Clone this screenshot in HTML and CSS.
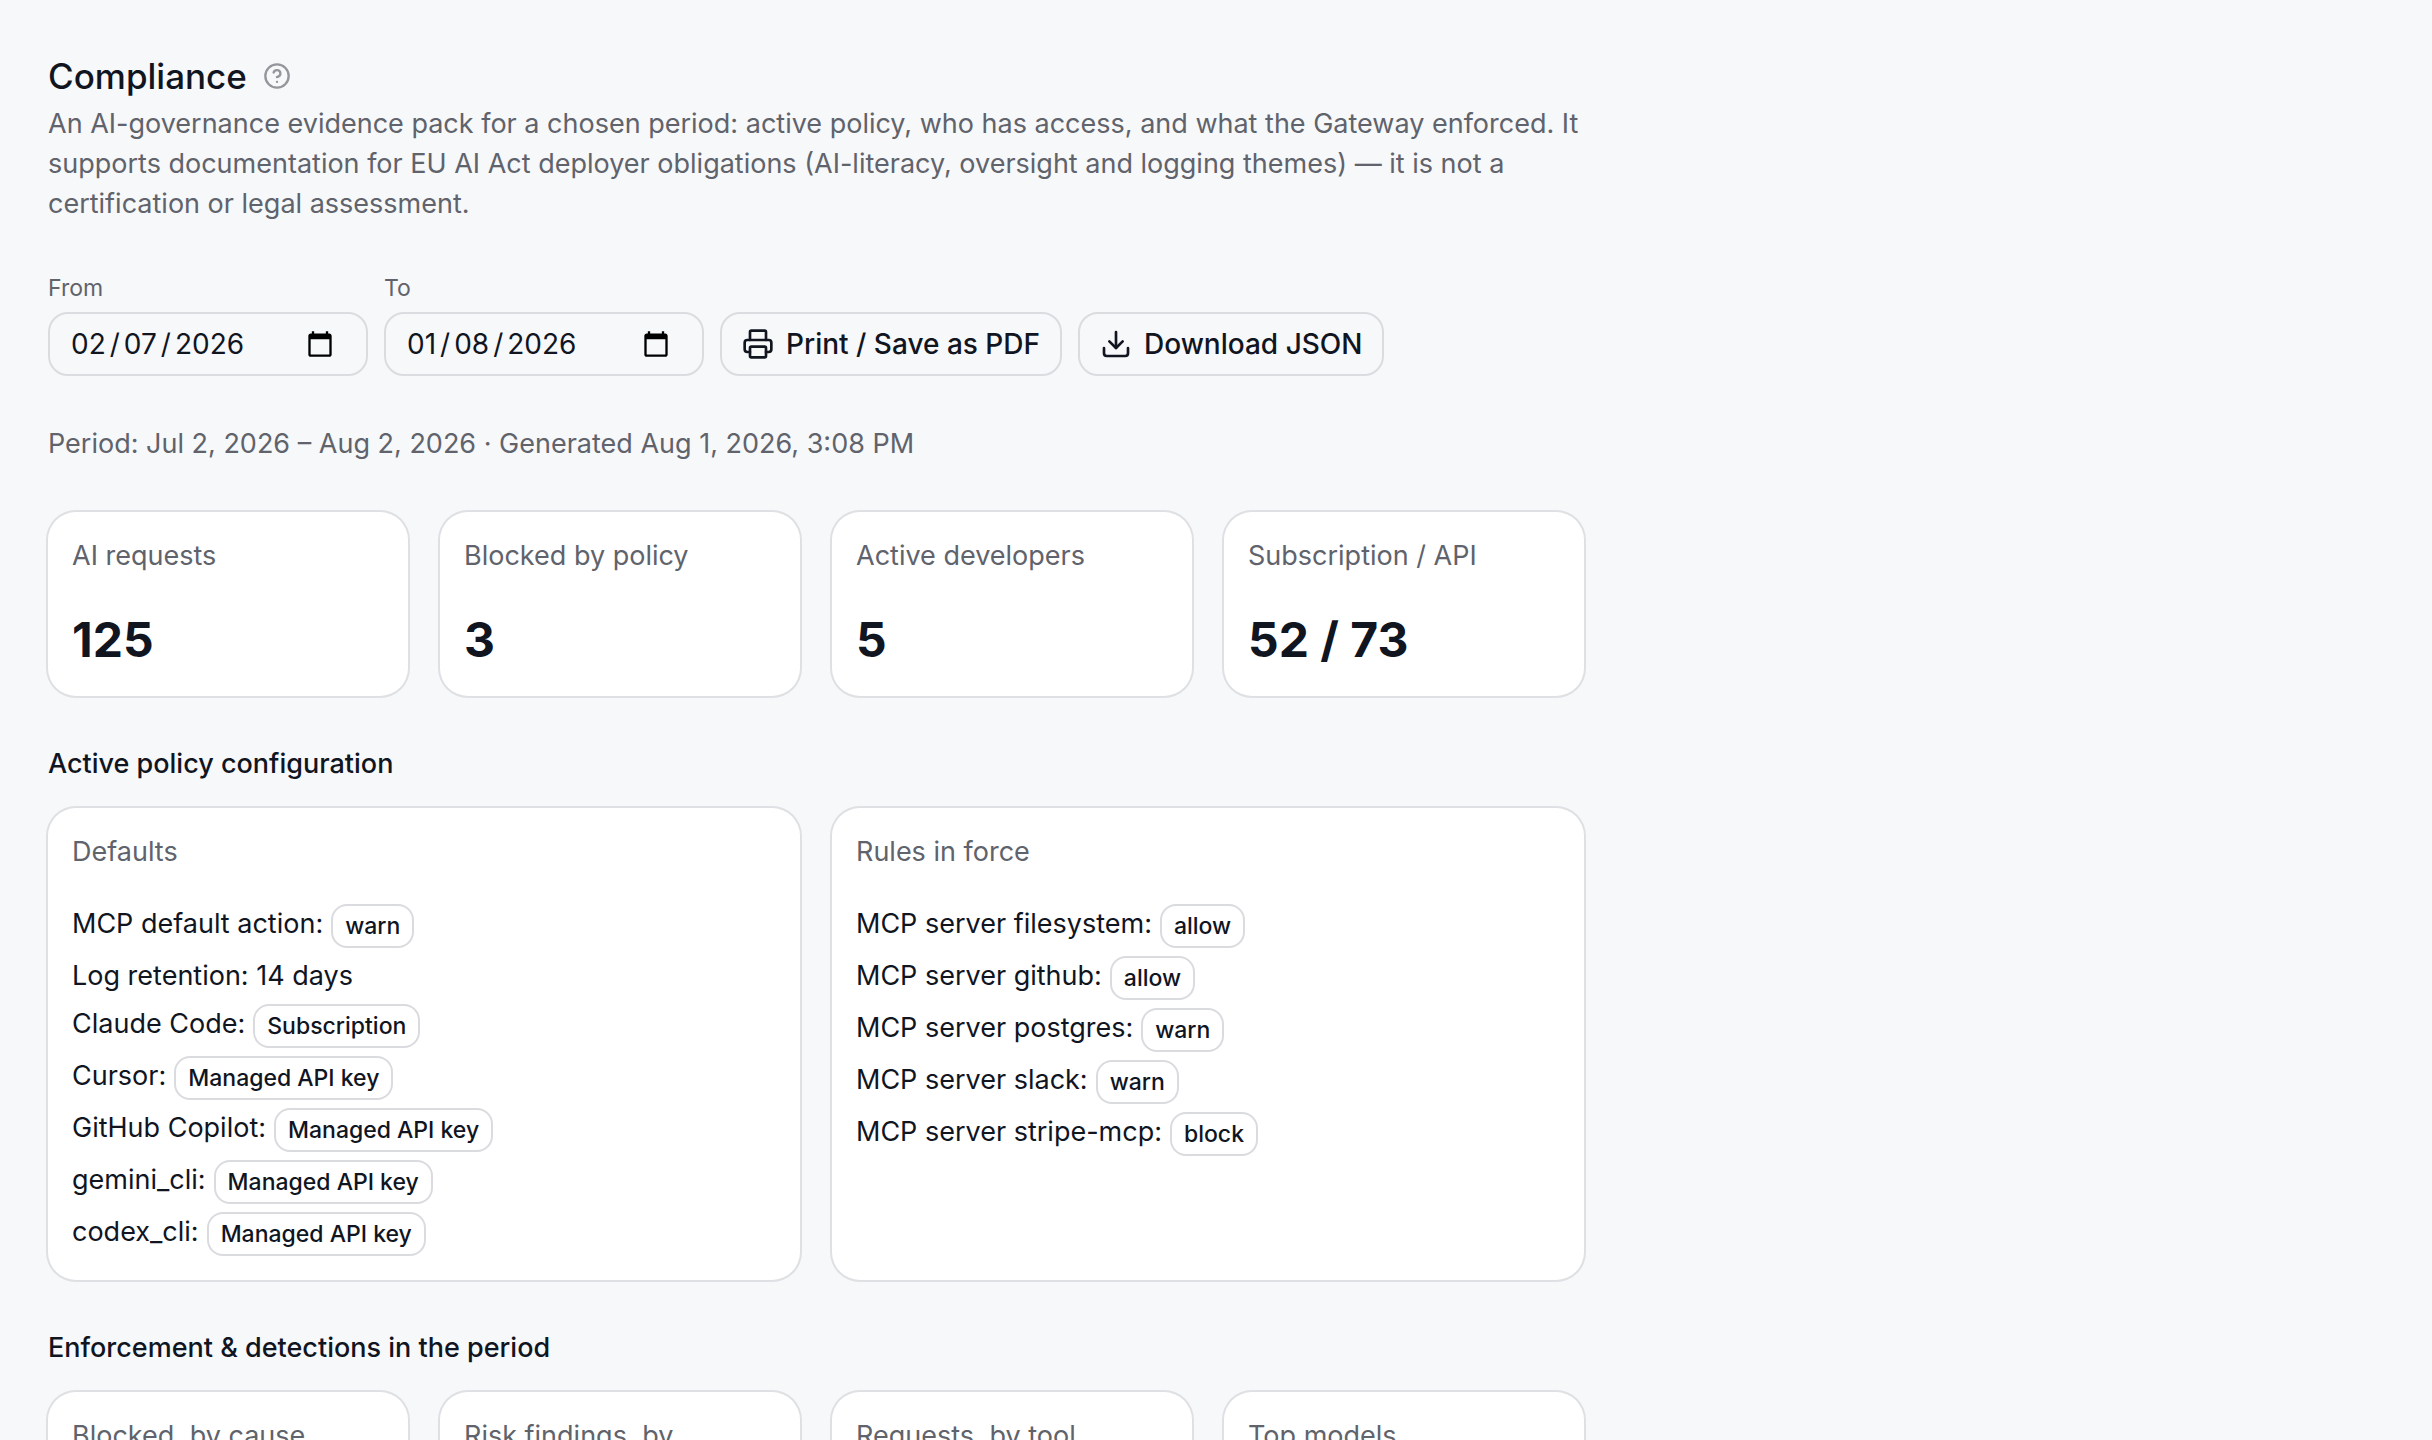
FILE: index.html
```
<!DOCTYPE html>
<html lang="en">
<head>
    <meta charset="UTF-8">
    <meta name="viewport" content="width=device-width, initial-scale=1.0">
    <title>Compliance</title>
    <link rel="stylesheet" href="styles.css">
</head>
<body>
    <main class="page">
        <header>
            <div class="title-row">
                <h1>Compliance</h1>
                <button type="button" class="help" aria-label="Help">
                    <svg viewBox="0 0 24 24"><circle cx="12" cy="12" r="10"/><path d="M9.09 9a3 3 0 0 1 5.83 1c0 2-3 3-3 3"/><path d="M12 17h.01"/></svg>
                </button>
            </div>
            <p class="muted">An AI-governance evidence pack for a chosen period: active policy, who has access, and what the Gateway enforced. It supports documentation for EU AI Act deployer obligations (AI-literacy, oversight and logging themes) — it is not a certification or legal assessment.</p>
        </header>

        <form class="toolbar">
            <div class="field">
                <label for="from">From</label>
                <input type="date" id="from" value="2026-02-07">
            </div>
            <div class="field">
                <label for="to">To</label>
                <input type="date" id="to" value="2026-01-08">
            </div>
            <button type="button" class="btn">
                <svg viewBox="0 0 24 24"><path d="M6 18H4a2 2 0 0 1-2-2v-5a2 2 0 0 1 2-2h16a2 2 0 0 1 2 2v5a2 2 0 0 1-2 2h-2"/><path d="M6 9V3a1 1 0 0 1 1-1h10a1 1 0 0 1 1 1v6"/><rect x="6" y="14" width="12" height="8" rx="1"/></svg>
                Print / Save as PDF
            </button>
            <button type="button" class="btn">
                <svg viewBox="0 0 24 24"><path d="M12 15V3"/><path d="M21 15v4a2 2 0 0 1-2 2H5a2 2 0 0 1-2-2v-4"/><path d="m7 10 5 5 5-5"/></svg>
                Download JSON
            </button>
        </form>

        <p class="muted">Period: Jul 2, 2026 – Aug 2, 2026 · Generated Aug 1, 2026, 3:08 PM</p>

        <div class="grid four">
            <div class="card">
                <p class="muted">AI requests</p>
                <p class="value">125</p>
            </div>
            <div class="card">
                <p class="muted">Blocked by policy</p>
                <p class="value">3</p>
            </div>
            <div class="card">
                <p class="muted">Active developers</p>
                <p class="value">5</p>
            </div>
            <div class="card">
                <p class="muted">Subscription / API</p>
                <p class="value">52 / 73</p>
            </div>
        </div>

        <section>
            <h2>Active policy configuration</h2>
            <div class="grid two">
                <div class="card">
                    <h3 class="muted">Defaults</h3>
                    <ul class="rules">
                        <li>MCP default action: <span class="badge">warn</span></li>
                        <li>Log retention: 14 days</li>
                        <li>Claude Code: <span class="badge">Subscription</span></li>
                        <li>Cursor: <span class="badge">Managed API key</span></li>
                        <li>GitHub Copilot: <span class="badge">Managed API key</span></li>
                        <li>gemini_cli: <span class="badge">Managed API key</span></li>
                        <li>codex_cli: <span class="badge">Managed API key</span></li>
                    </ul>
                </div>
                <div class="card">
                    <h3 class="muted">Rules in force</h3>
                    <ul class="rules">
                        <li>MCP server filesystem: <span class="badge">allow</span></li>
                        <li>MCP server github: <span class="badge">allow</span></li>
                        <li>MCP server postgres: <span class="badge">warn</span></li>
                        <li>MCP server slack: <span class="badge">warn</span></li>
                        <li>MCP server stripe-mcp: <span class="badge">block</span></li>
                    </ul>
                </div>
            </div>
        </section>

        <section>
            <h2>Enforcement &amp; detections in the period</h2>
            <div class="grid four">
                <div class="card"><h3 class="muted">Blocked, by cause</h3></div>
                <div class="card"><h3 class="muted">Risk findings, by</h3></div>
                <div class="card"><h3 class="muted">Requests, by tool</h3></div>
                <div class="card"><h3 class="muted">Top models</h3></div>
            </div>
        </section>
    </main>
</body>
</html>
```
FILE: styles.css
```
* {
    box-sizing: border-box;
}

body {
    margin: 0;
    background: #f7f8fa;
    color: #10151f;
    font-family: Inter, "Liberation Sans", sans-serif;
    font-size: 27px;
    line-height: 40px;
}

h1, h2, h3, p, ul {
    margin: 0;
    padding: 0;
    font-size: inherit;
    font-weight: 400;
}

svg {
    width: 32px;
    height: 32px;
    fill: none;
    stroke: currentColor;
    stroke-width: 2;
    stroke-linecap: round;
    stroke-linejoin: round;
}

.page {
    display: flex;
    flex-direction: column;
    gap: 48px;
    max-width: 1632px;
    padding: 48px;
}

.muted {
    color: #60636b;
}

.title-row {
    display: flex;
    align-items: center;
    gap: 16px;
}

h1 {
    font-size: 35px;
    line-height: 56px;
    font-weight: 500;
}

.help {
    display: flex;
    padding: 0;
    border: none;
    background: none;
    color: #94969b;
}

.help svg {
    width: 28px;
    height: 28px;
}

.toolbar {
    display: flex;
    flex-wrap: wrap;
    align-items: flex-end;
    gap: 16px;
}

.field {
    display: flex;
    flex-direction: column;
    gap: 8px;
    width: 320px;
}

.field label {
    color: #60636b;
    font-size: 23px;
    line-height: 32px;
}

.field input, .btn {
    height: 64px;
    padding: 0 20px;
    border: 2px solid #dadcdf;
    border-radius: 20px;
    background: transparent;
    color: #10151f;
    font-family: inherit;
    font-size: 28px;
}

.field input::-webkit-datetime-edit-text {
    padding: 0 3px;
}

.field input::-webkit-calendar-picker-indicator {
    width: 28px;
    height: 28px;
    padding: 0;
    margin-right: 12px;
    background-position: center;
    background-repeat: no-repeat;
    background-size: 28px 28px;
}

.btn {
    display: flex;
    align-items: center;
    gap: 12px;
    font-weight: 500;
}

.grid {
    display: grid;
    gap: 32px;
}

.four {
    grid-template-columns: repeat(4, 1fr);
}

.two {
    grid-template-columns: repeat(2, 1fr);
}

.card {
    display: flex;
    flex-direction: column;
    gap: 32px;
    padding: 24px;
    border-radius: 28px;
    background: #fff;
    box-shadow: 0 0 0 2px #dfe0e4;
}

.value {
    font-size: 48px;
    line-height: 64px;
    font-weight: 700;
}

section {
    display: flex;
    flex-direction: column;
    gap: 24px;
}

h2 {
    font-weight: 500;
}

.rules {
    display: flex;
    flex-direction: column;
    gap: 8px;
    list-style: none;
}

.rules li {
    display: flex;
    gap: 8px;
}

.badge {
    height: 44px;
    padding: 0 12px;
    border: 2px solid #dadbdf;
    border-radius: 16px;
    font-size: 23px;
    font-weight: 500;
}
```
